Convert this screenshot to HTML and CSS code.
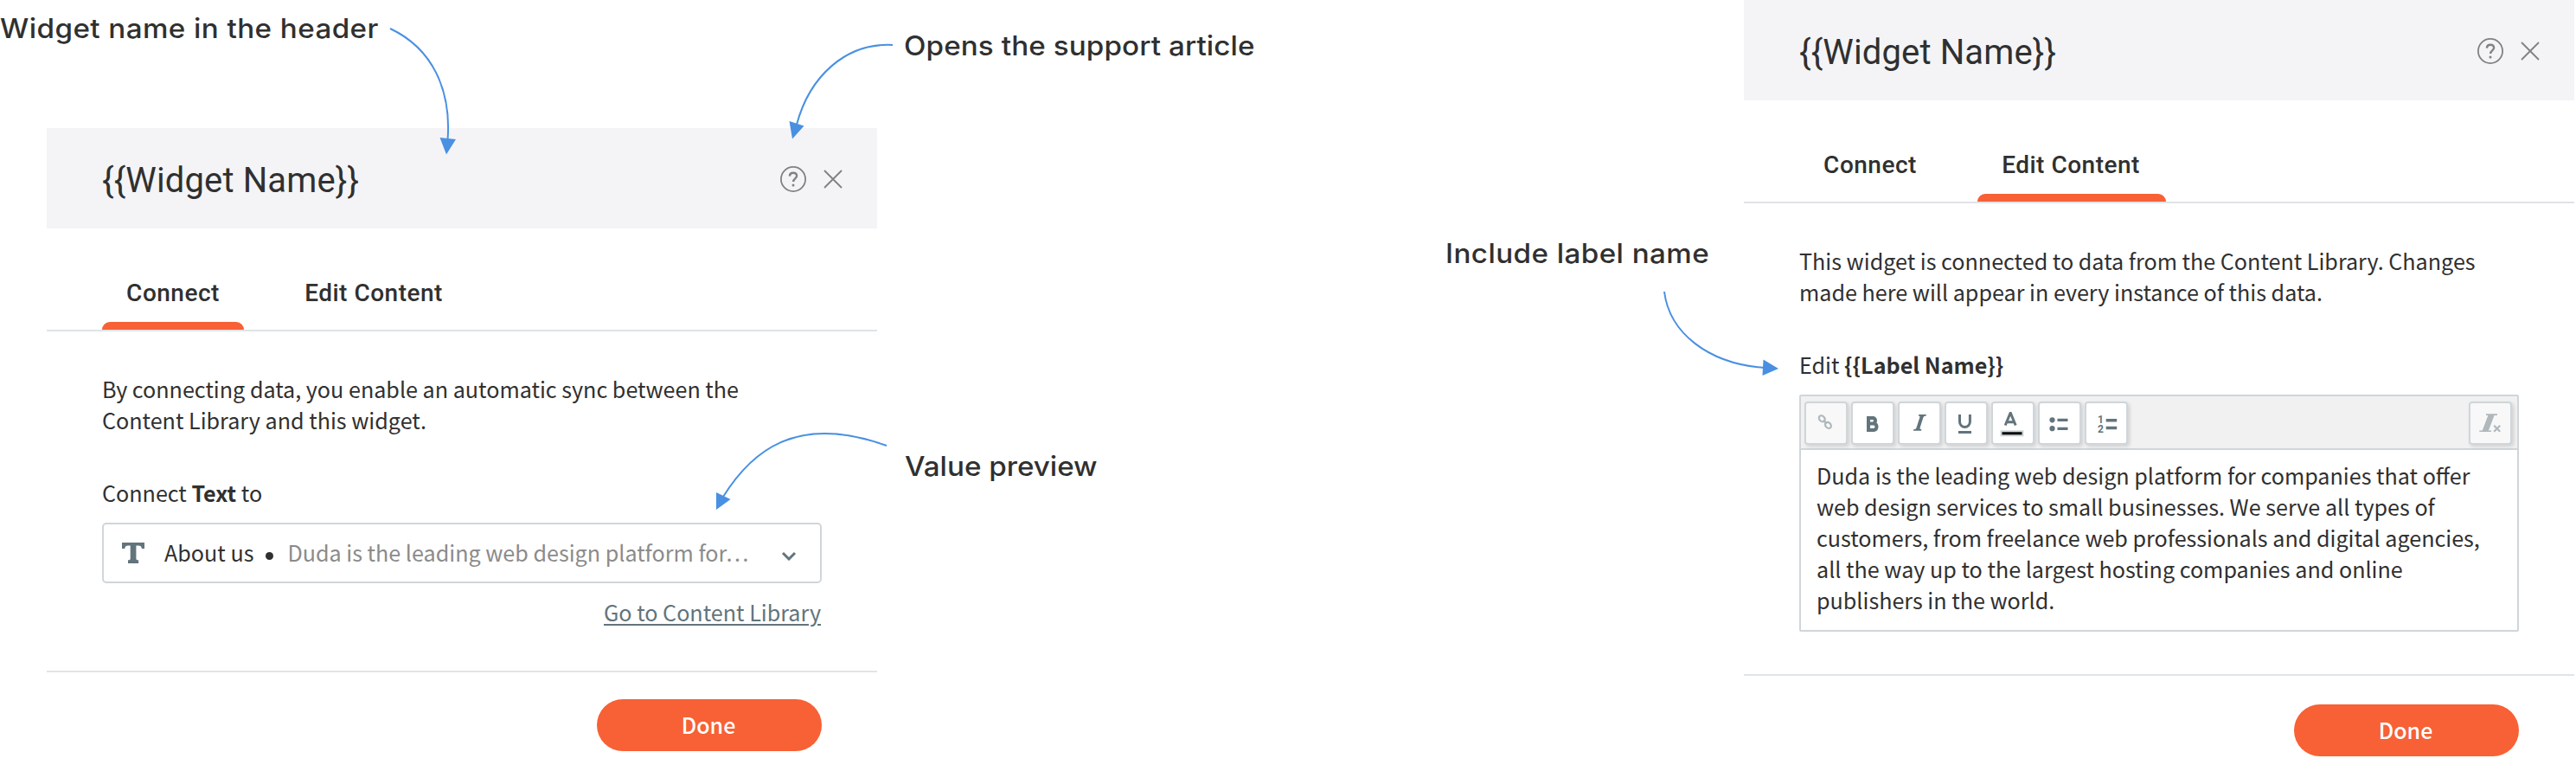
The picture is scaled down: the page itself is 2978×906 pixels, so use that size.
FILE: index.html
```html
<!DOCTYPE html>
<html lang="en">
<head>
<meta charset="utf-8">
<title>Widget panel guide</title>
<link rel="stylesheet" href="styles.css">
</head>
<body>
<main class="board">
  <section class="panel panel-connect">
    <header class="panel-header">
      <h1 class="panel-title">{{Widget Name}}</h1>
      <div class="panel-actions">
        <svg class="icon-help" viewBox="0 0 30 30"><circle cx="15" cy="15" r="14.1"/><path d="M10.9 11.6c.1-2.600 1.700-3.900 4.100-3.900s4.100 1.300 4.100 3.600c0 3.200-4 3.100-4 6.800"/><circle class="dot" cx="15" cy="21.900" r="1.500"/></svg>
        <svg class="icon-close" viewBox="0 0 22 22"><path d="M1 1l20 20M21 1L1 21"/></svg>
      </div>
    </header>
    <nav class="tabs">
      <a class="tab tab-short active">Connect</a>
      <a class="tab tab-long">Edit Content</a>
    </nav>
    <div class="panel-body">
      <p class="intro">By connecting data, you enable an automatic sync between the<br>Content Library and this widget.</p>
      <p class="field-label">Connect <b>Text</b> to</p>
      <div class="select">
        <svg class="icon-type" viewBox="0 0 26 24"><path d="M0 0h26v7h-3.200c-.3-2.500-1.300-3.400-3.800-3.400h-2.600v14.900c0 1.300.5 1.700 2.700 1.800V24H7v-3.700c2.200-.1 2.700-.5 2.700-1.800V3.600H7.100c-2.500 0-3.500.9-3.800 3.400H0z"/></svg>
        <span class="select-name">About us</span>
        <span class="select-dot"></span>
        <span class="select-preview">Duda is the leading web design platform for…</span>
        <svg class="icon-chevron" viewBox="0 0 18 11"><path d="M2 2l7 7 7-7"/></svg>
      </div>
      <a class="library-link">Go to Content Library</a>
    </div>
    <footer class="panel-footer"><button class="done">Done</button></footer>
  </section>

  <section class="panel panel-edit">
    <header class="panel-header">
      <h1 class="panel-title">{{Widget Name}}</h1>
      <div class="panel-actions">
        <svg class="icon-help" viewBox="0 0 30 30"><circle cx="15" cy="15" r="14.1"/><path d="M10.9 11.6c.1-2.600 1.700-3.900 4.100-3.900s4.100 1.300 4.100 3.600c0 3.200-4 3.100-4 6.800"/><circle class="dot" cx="15" cy="21.900" r="1.500"/></svg>
        <svg class="icon-close" viewBox="0 0 22 22"><path d="M1 1l20 20M21 1L1 21"/></svg>
      </div>
    </header>
    <nav class="tabs">
      <a class="tab tab-short">Connect</a>
      <a class="tab tab-long active">Edit Content</a>
    </nav>
    <div class="panel-body">
      <p class="intro">This widget is connected to data from the Content Library. Changes<br>made here will appear in every instance of this data.</p>
      <p class="field-label">Edit <b>{{Label Name}}</b></p>
      <div class="editor">
        <div class="toolbar">
          <span class="tool disabled"><svg viewBox="0 0 46 46"><g class="stroke-2"><ellipse cx="18.300" cy="17.800" rx="3" ry="3.900" transform="rotate(-45 18.300 17.800)"/><ellipse cx="25.400" cy="25.400" rx="3" ry="3.900" transform="rotate(-45 25.400 25.400)"/><path d="M19.800 19.600l4 4"/></g></svg></span>
          <span class="tool"><svg viewBox="0 0 46 46"><path class="stroke-4" d="M18 17h5.600a3.400 3.400 0 0 1 0 6.500H18h6.300a3.800 3.800 0 0 1 0 7.500H18z"/></svg></span>
          <span class="tool"><svg viewBox="0 0 46 46"><path class="fill" d="M22.300 13h8.700l-.4 1.400c-2 .2-2.700.5-3.200 2.100l-3.700 11.600c-.4 1.700 0 2 1.700 2.200L25 31.700h-9.100l.4-1.400c2-.2 2.800-.6 3.300-2.200l3.700-11.600c.4-1.600.1-1.900-1.400-2.100z"/></svg></span>
          <span class="tool"><svg viewBox="0 0 46 46"><path class="stroke-3" d="M15.500 13v8.500a5.800 5.800 0 0 0 11.900 0V13M14 33.500h15"/></svg></span>
          <span class="tool"><svg viewBox="0 0 46 46"><path class="stroke-3" d="M14.200 25.500l5.800-14h.4l5.800 14M16.300 21.700h7.800"/><path class="swatch-edge" d="M8.500 31.300h27v7h-27z"/><path class="swatch" d="M10.500 33.300h23v3h-23z"/></svg></span>
          <span class="tool"><svg viewBox="0 0 46 46"><g class="fill"><circle cx="14.500" cy="19.300" r="3.100"/><circle cx="14.500" cy="29.200" r="3.100"/><path d="M20.500 17.700h12v3.400h-12zM20.500 27.700h12v3.400h-12z"/></g></svg></span>
          <span class="tool numbered"><svg viewBox="0 0 46 46"><path class="fill" d="M22.700 18h12.500v3.400H22.700zM22.700 26.800h12.500v3.400H22.700z"/><text class="digit" x="13" y="22.600">1</text><text class="digit" x="13" y="34.300">2</text></svg></span>
          <span class="tool disabled tool-clear"><svg viewBox="0 0 46 46"><path class="fill" d="M18 12.300h13v1.600h-3.400l-6.700 17.600h3.200v1.600H10.300v-1.600h3.400l6.700-17.600H18z"/><path class="stroke-2" d="M27.200 25.800l7 7M34.200 25.800l-7 7"/></svg></span>
        </div>
        <p class="editor-text">Duda is the leading web design platform for companies that offer<br>web design services to small businesses. We serve all types of<br>customers, from freelance web professionals and digital agencies,<br>all the way up to the largest hosting companies and online<br>publishers in the world.</p>
      </div>
    </div>
    <footer class="panel-footer"><button class="done">Done</button></footer>
  </section>

  <!-- Callouts pinned over the panels -->
  <svg class="arrows" viewBox="0 0 2978 906">
    <path class="line" d="M451 33C500 56 522 104 517.500 162M1032 52C978 49 936 88 921 144M1025 515C919 477 868 523 836 574M1924 337C1930 385 1975 420 2039 425"/>
    <path class="head" d="M508.500 159l18.500 2-11 17.500zM912.500 140l17 5.500-13.500 15zM828 569l16.500 8-16.500 12zM2038.500 415.500l17.500 10.500-18.500 8z"/>
  </svg>
  <span class="callout callout-header">Widget name in the header</span>
  <span class="callout callout-help">Opens the support article</span>
  <span class="callout callout-value">Value preview</span>
  <span class="callout callout-label">Include label name</span>
</main>
</body>
</html>
```

FILE: styles.css
```css
* { box-sizing: border-box; }
body { margin: 0; background: #fff; color: #303030; }
h1, p { margin: 0; font-weight: 400; }

.board {
  position: relative;
  width: 2978px;
  height: 906px;
  overflow: hidden;
  display: flex;
  justify-content: space-between;
  align-items: flex-start;
  padding: 0 2px 0 54px;
  font-family: "Noto Sans CJK SC", "Open Sans", sans-serif;
  font-size: 25.14px;
  line-height: 36px;
}
.panel { width: 960px; }
.panel-connect { margin-top: 148px; }

.panel-header {
  height: 116px;
  padding: 0 40px 0 64px;
  display: flex;
  align-items: center;
  justify-content: space-between;
  background: #f4f4f7;
}
.panel-title { font: 400 40px/48px Roboto, sans-serif; letter-spacing: .13px; padding-top: 6px; }
.panel-actions { display: flex; align-items: center; gap: 20px; padding-top: 2px; }
.panel-actions svg { fill: none; stroke: #818181; stroke-width: 1.8; }
.icon-help { width: 30px; height: 30px; }
.panel-actions .icon-help path { stroke-width: 2.4; }
.panel-actions .icon-help .dot { fill: #818181; stroke: none; }
.icon-close { width: 22px; height: 22px; }

.tabs {
  height: 119px;
  padding: 0 64px;
  border-bottom: 2px solid #dfe3e7;
  display: flex;
  gap: 42px;
}
.tab {
  display: flex;
  flex-direction: column;
  justify-content: space-between;
  align-items: center;
  padding-top: 59px;
  font: 500 28px/32px Roboto, sans-serif;
  letter-spacing: .5px;
}
.tab-short { width: 164px; }
.tab-long { width: 218px; text-indent: -2px; }
.tab.active::after {
  content: "";
  width: 100%;
  height: 9px;
  border-radius: 9px 9px 0 0;
  background: #f76135;
}

.panel-body { padding: 48px 64px 0; display: flex; flex-direction: column; }
.field-label { margin: 48px 0 17px; }

.select {
  height: 70px;
  padding: 0 27px 0 21px;
  border: 2px solid #cfd6da;
  border-radius: 5px;
  display: flex;
  align-items: center;
}
.icon-type { width: 26px; height: 24px; fill: #62747c; }
.select-name { margin-left: 23px; padding-bottom: 2px; }
.select-dot { width: 9px; height: 9px; margin: 6px 16px 0 14px; border-radius: 50%; background: #303030; }
.select-preview { padding-bottom: 2px; color: #8b8b8b; }
.icon-chevron { width: 18px; height: 11px; margin: 6px 0 0 auto; fill: none; stroke: #62747c; stroke-width: 3; }

.library-link {
  align-self: flex-end;
  margin: 15px 1px 0 0;
  color: #62747c;
  text-decoration: underline;
  text-decoration-thickness: 2px;
  text-underline-offset: 3px;
}

.panel-footer {
  margin-top: 50px;
  padding: 31px 64px 0;
  border-top: 2px solid #dfe4e8;
  display: flex;
  justify-content: flex-end;
}
.panel-edit .panel-footer { margin-top: 49px; padding-top: 33px; }
.done {
  width: 260px;
  height: 60px;
  padding: 0 2px 2px 0;
  border: 0;
  border-radius: 30px;
  background: #f76135;
  color: #fff;
  font: 500 25px/36px "Noto Sans CJK SC", "Open Sans", sans-serif;
}

.editor { height: 274px; border: 2px solid #cfd6da; border-radius: 2px; }
.toolbar {
  height: 62px;
  padding: 6px 6px 0 4px;
  border-bottom: 2px solid #cfd6da;
  background: #f1f1f1;
  display: flex;
  gap: 4px;
}
.tool {
  width: 50px;
  height: 50px;
  border: 2px solid #cfd6da;
  border-radius: 4px;
  background: #fff;
  box-shadow: 2px 2px 4px rgba(0, 0, 0, .14);
  color: #62747c;
}
.tool.disabled { background: #f8f8f8; color: #b0b8bc; }
.tool-clear { margin-left: auto; }
.tool svg { display: block; width: 46px; height: 46px; fill: none; }
.tool svg .fill { fill: currentColor; }
.stroke-2, .stroke-3, .stroke-4 { stroke: currentColor; }
.stroke-2 { stroke-width: 2.2; }
.stroke-3 { stroke-width: 3; }
.stroke-4 { stroke-width: 4; }
.swatch { fill: #000; }
.swatch-edge { fill: #cfd6da; }
.digit { fill: currentColor; font: 700 12px Roboto, sans-serif; }
.editor-text { padding: 11px 0 11px 18px; white-space: nowrap; }

.arrows { position: absolute; left: 0; top: 0; width: 2978px; height: 906px; pointer-events: none; }
.arrows .line { fill: none; stroke: #4990e2; stroke-width: 2; }
.arrows .head { fill: #4990e2; }
.callout {
  position: absolute;
  white-space: nowrap;
  font: 500 31px/40px Inter, sans-serif;
  transform: scaleX(1.07);
  transform-origin: left;
}
.callout-header { left: 0; top: 13px; letter-spacing: .4px; }
.callout-help { left: 1045px; top: 33px; letter-spacing: .1px; }
.callout-value { left: 1046px; top: 519px; }
.callout-label { left: 1671px; top: 273px; letter-spacing: .4px; }
```
